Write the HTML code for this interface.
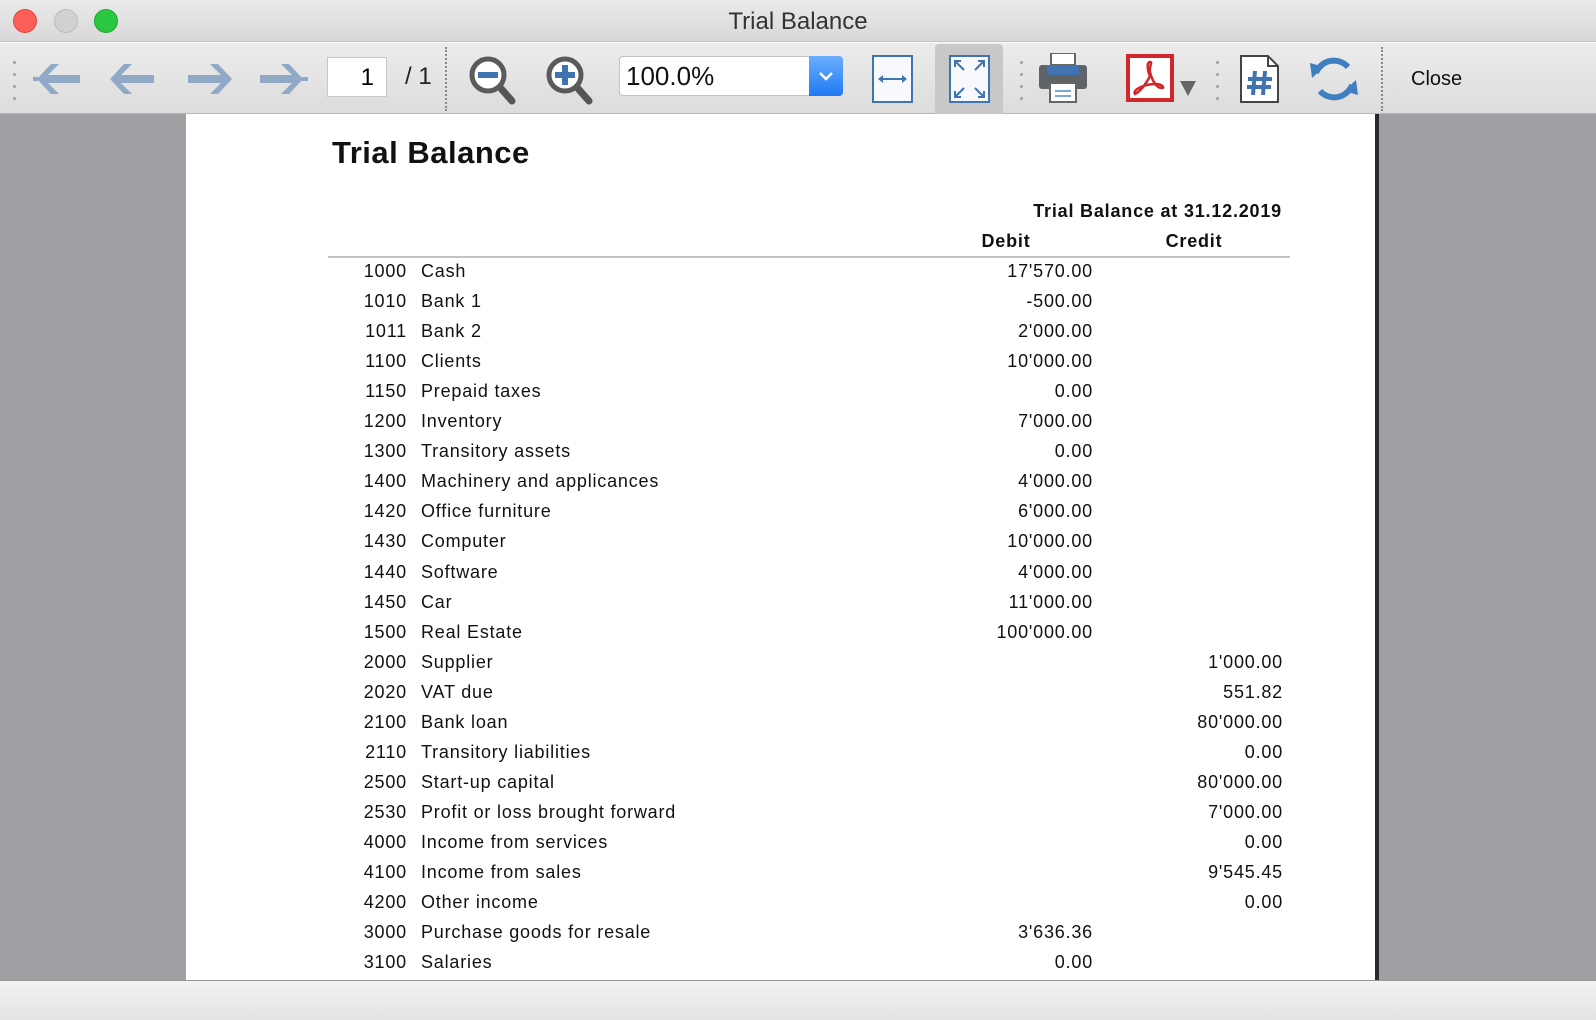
<!DOCTYPE html>
<html><head><meta charset="utf-8"><style>
*{margin:0;padding:0;box-sizing:border-box}
body{width:1596px;height:1020px;overflow:hidden;background:#a09fa4;font-family:"Liberation Sans",Arial,sans-serif;position:relative}
.abs{position:absolute}
#title{left:0;top:0;width:1596px;height:42px;background:linear-gradient(#ebeaeb,#d9d8d9);border-bottom:1px solid #c4c3c4}
#tb{left:0;top:42px;width:1596px;height:72px;background:linear-gradient(#ececec,#dcdcdc);border-bottom:1px solid #b8b8b8;border-top:1px solid #fafafa}
.dot{position:absolute;width:3px;height:3px;border-radius:2px;background:#a0a0a0}
#page{left:186px;top:114px;width:1193px;height:866px;background:#fff;border-right:4px solid #2a2a2a}
#bottom{left:0;top:980px;width:1596px;height:40px;background:linear-gradient(#f2f2f2,#e4e4e4);border-top:1px solid #9a9a9a}
.r{position:absolute;font-size:18px;color:#111;white-space:nowrap;line-height:20px;letter-spacing:0.8px}
.n{text-align:right;width:81px}
</style></head><body>
<div id="title" class="abs">
 <div class="abs" style="left:13px;top:9px;width:24px;height:24px;border-radius:12px;background:#fc5f57;border:1px solid #de4840"></div>
 <div class="abs" style="left:54px;top:9px;width:24px;height:24px;border-radius:12px;background:#d2d1d2;border:1px solid #bdbcbd"></div>
 <div class="abs" style="left:94px;top:9px;width:24px;height:24px;border-radius:12px;background:#2ac840;border:1px solid #1aab2e"></div>
 <div class="abs" style="left:0;width:1596px;top:8px;text-align:center;font-size:24px;color:#333">Trial Balance</div>
</div>
<div id="tb" class="abs">
 <div class="dot" style="left:13px;top:18px"></div><div class="dot" style="left:13px;top:30px"></div><div class="dot" style="left:13px;top:42px"></div><div class="dot" style="left:13px;top:54px"></div>
 <svg class="abs" style="left:33px;top:16px" width="48" height="40" viewBox="0 0 48 40"><polygon fill="#8fa9c6" points="4,20 18,5 26,5 15,16 47,16 47,24 15,24 26,35 18,35"/><rect x="0" y="18" width="5" height="4" fill="#8fa9c6"/></svg>
 <svg class="abs" style="left:108px;top:16px" width="48" height="40" viewBox="0 0 48 40"><polygon fill="#8fa9c6" points="2,20 16,5 24,5 13,16 46,16 46,24 13,24 24,35 16,35"/></svg>
 <svg class="abs" style="left:186px;top:16px" width="48" height="40" viewBox="0 0 48 40"><polygon fill="#8fa9c6" points="46,20 32,5 24,5 35,16 2,16 2,24 35,24 24,35 32,35"/></svg>
 <svg class="abs" style="left:260px;top:16px" width="48" height="40" viewBox="0 0 48 40"><polygon fill="#8fa9c6" points="43,20 29,5 21,5 32,16 0,16 0,24 32,24 21,35 29,35"/><rect x="42" y="18" width="6" height="4" fill="#8fa9c6"/></svg>
 <div class="abs" style="left:327px;top:14px;width:60px;height:40px;background:#fff;border:1px solid #c8c8c8;font-size:24px;text-align:right;padding:6px 12px 0 0">1</div>
 <div class="abs" style="left:405px;top:20px;font-size:24px;color:#222">/ 1</div>
 <div class="abs" style="left:445px;top:4px;height:64px;border-left:2px dotted #888"></div>
 <svg class="abs" style="left:468px;top:12px" width="52" height="52" viewBox="0 0 52 52"><line x1="29" y1="29" x2="44" y2="46" stroke="#555" stroke-width="7" stroke-linecap="round"/><circle cx="20" cy="20" r="16" fill="#fff" stroke="#5a5a5a" stroke-width="5"/><rect x="10" y="17" width="20" height="6" fill="#3f74b0"/></svg>
 <svg class="abs" style="left:545px;top:12px" width="52" height="52" viewBox="0 0 52 52"><line x1="29" y1="29" x2="44" y2="46" stroke="#555" stroke-width="7" stroke-linecap="round"/><circle cx="20" cy="20" r="16" fill="#fff" stroke="#5a5a5a" stroke-width="5"/><rect x="10" y="17" width="20" height="6" fill="#3f74b0"/><rect x="17" y="10" width="6" height="20" fill="#3f74b0"/></svg>
 <div class="abs" style="left:619px;top:13px;width:224px;height:40px;background:#fff;border:1px solid #c4c4c4;border-radius:4px;font-size:26px;padding:4px 0 0 6px;color:#111">100.0%</div>
 <div class="abs" style="left:809px;top:13px;width:34px;height:40px;background:linear-gradient(#6aaefc,#1f7af5);border-radius:0 4px 4px 0"><svg width="34" height="40"><polyline points="11,17 17,23 23,17" fill="none" stroke="#fff" stroke-width="2.5"/></svg></div>
 <svg class="abs" style="left:872px;top:12px" width="41" height="48"><rect x="1" y="1" width="39" height="46" fill="#f7f9fc" stroke="#3f74b0" stroke-width="2"/><line x1="8" y1="24" x2="33" y2="24" stroke="#3f74b0" stroke-width="2"/><polygon points="6,24 11,20 11,28" fill="#3f74b0"/><polygon points="35,24 30,20 30,28" fill="#3f74b0"/></svg>
 <div class="abs" style="left:935px;top:1px;width:68px;height:70px;background:#c8c8c8;border-radius:4px 4px 0 0"></div>
 <svg class="abs" style="left:949px;top:12px" width="41" height="48"><rect x="1" y="1" width="39" height="46" fill="#f7f9fc" stroke="#3f74b0" stroke-width="2"/><g stroke="#3f74b0" stroke-width="2" fill="none"><line x1="6" y1="6" x2="15" y2="15"/><line x1="35" y1="6" x2="26" y2="15"/><line x1="6" y1="42" x2="15" y2="33"/><line x1="35" y1="42" x2="26" y2="33"/><polyline points="6,12 6,6 12,6"/><polyline points="29,6 35,6 35,12"/><polyline points="6,36 6,42 12,42"/><polyline points="29,42 35,42 35,36"/></g></svg>
 <div class="dot" style="left:1020px;top:18px"></div><div class="dot" style="left:1020px;top:30px"></div><div class="dot" style="left:1020px;top:42px"></div><div class="dot" style="left:1020px;top:54px"></div>
 <svg class="abs" style="left:1038px;top:10px" width="50" height="50"><rect x="13" y="0" width="24" height="12" fill="#fff" stroke="#666" stroke-width="2"/><rect x="1" y="12" width="48" height="24" rx="3" fill="#5f6266"/><rect x="9" y="12" width="32" height="10" fill="#3f74b0"/><rect x="12" y="30" width="26" height="19" fill="#fff" stroke="#666" stroke-width="2"/><line x1="17" y1="38" x2="33" y2="38" stroke="#7ea6d0" stroke-width="2"/><line x1="17" y1="43" x2="33" y2="43" stroke="#7ea6d0" stroke-width="2"/></svg>
 <svg class="abs" style="left:1126px;top:11px" width="50" height="50"><rect x="2" y="2" width="44" height="44" fill="#fff" stroke="#d0282a" stroke-width="4"/><path d="M24 8 C20 8 22 18 24 22 C20 30 14 38 9 40 C6 36 18 30 30 30 C36 30 39 34 36 34 C30 34 26 26 24 18 C23 12 27 8 24 8Z" fill="none" stroke="#d0282a" stroke-width="2.5"/></svg>
 <svg class="abs" style="left:1180px;top:38px" width="16" height="16"><polygon points="0,0 16,0 8,15" fill="#666"/></svg>
 <div class="dot" style="left:1216px;top:18px"></div><div class="dot" style="left:1216px;top:30px"></div><div class="dot" style="left:1216px;top:42px"></div><div class="dot" style="left:1216px;top:54px"></div>
 <svg class="abs" style="left:1240px;top:12px" width="40" height="48"><path d="M1 1 H28 L38 11 V47 H1 Z" fill="#fff" stroke="#444" stroke-width="2"/><path d="M28 1 V11 H38" fill="none" stroke="#444" stroke-width="2"/><g stroke="#3f74b0" stroke-width="4"><line x1="15" y1="16" x2="13" y2="40"/><line x1="25" y1="16" x2="23" y2="40"/><line x1="8" y1="24" x2="32" y2="24"/><line x1="7" y1="32" x2="31" y2="32"/></g></svg>
 <svg class="abs" style="left:1308px;top:10px" width="52" height="52" viewBox="0 0 52 52"><path d="M40 14 A19 19 0 0 0 8 20" fill="none" stroke="#3f7fc0" stroke-width="6"/><polygon points="2,10 16,14 4,25" fill="#3f7fc0"/><path d="M12 38 A19 19 0 0 0 44 32" fill="none" stroke="#3f7fc0" stroke-width="6"/><polygon points="50,42 36,38 48,27" fill="#3f7fc0"/></svg>
 <div class="abs" style="left:1381px;top:4px;height:64px;border-left:2px dotted #888"></div>
 <div class="abs" style="left:1411px;top:25px;font-size:20px;color:#111">Close</div>
</div>
<div id="page" class="abs">
 <div class="abs" style="left:146px;top:21px;font-size:31px;font-weight:bold;color:#111;letter-spacing:0.5px">Trial Balance</div>
 <div class="r" style="left:800px;width:296px;text-align:right;top:87px;font-weight:bold">Trial Balance at 31.12.2019</div>
 <div class="r" style="left:760px;width:120px;text-align:center;top:117px;font-weight:bold">Debit</div>
 <div class="r" style="left:948px;width:120px;text-align:center;top:117px;font-weight:bold">Credit</div>
 <div class="abs" style="left:142px;top:142px;width:962px;height:2px;background:#c2c2c2"></div>
</div>
<script>
var d=[["1000","Cash","17'570.00",""],["1010","Bank 1","-500.00",""],["1011","Bank 2","2'000.00",""],["1100","Clients","10'000.00",""],["1150","Prepaid taxes","0.00",""],["1200","Inventory","7'000.00",""],["1300","Transitory assets","0.00",""],["1400","Machinery and applicances","4'000.00",""],["1420","Office furniture","6'000.00",""],["1430","Computer","10'000.00",""],["1440","Software","4'000.00",""],["1450","Car","11'000.00",""],["1500","Real Estate","100'000.00",""],["2000","Supplier","","1'000.00"],["2020","VAT due","","551.82"],["2100","Bank loan","","80'000.00"],["2110","Transitory liabilities","","0.00"],["2500","Start-up capital","","80'000.00"],["2530","Profit or loss brought forward","","7'000.00"],["4000","Income from services","","0.00"],["4100","Income from sales","","9'545.45"],["4200","Other income","","0.00"],["3000","Purchase goods for resale","3'636.36",""],["3100","Salaries","0.00",""]];
var p=document.getElementById('page'),h='';
d.forEach(function(r,i){var t=147+i*30.05;
h+='<div class="r n" style="left:140px;top:'+t+'px">'+r[0]+'</div><div class="r" style="left:235px;top:'+t+'px">'+r[1]+'</div><div class="r" style="left:707px;width:200px;text-align:right;top:'+t+'px">'+r[2]+'</div><div class="r" style="left:897px;width:200px;text-align:right;top:'+t+'px">'+r[3]+'</div>';});
p.insertAdjacentHTML('beforeend',h);
</script>
<div id="bottom" class="abs"></div>
</body></html>
